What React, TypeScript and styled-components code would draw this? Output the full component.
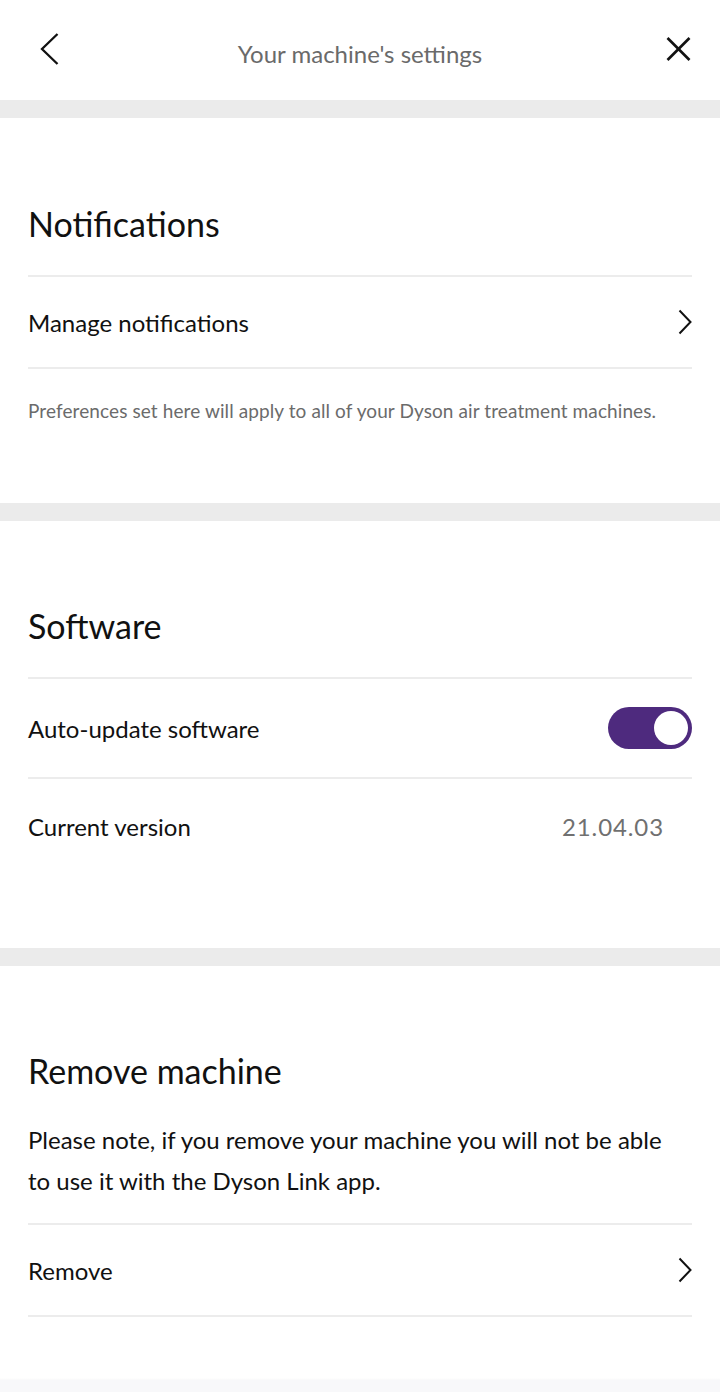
import React from "react";
import styled, { createGlobalStyle } from "styled-components";

const Global = createGlobalStyle`
  html, body { margin: 0; padding: 0; background: #ffffff; }
  body { font-family: Lato, "Open Sans", sans-serif; color: #111; }
  * { box-sizing: border-box; }
`;

const Page = styled.div`
  width: 720px;
  min-height: 1392px;
  background: #fff;
  display: flex;
  flex-direction: column;
`;

const Header = styled.header`
  height: 100px;
  display: grid;
  grid-template-columns: 100px 1fr 100px;
  align-items: center;
`;

const HeaderButton = styled.div<{ $align: "left" | "right" }>`
  display: flex;
  justify-content: ${(p) => (p.$align === "left" ? "flex-start" : "flex-end")};
  padding: ${(p) => (p.$align === "left" ? "0 0 2px 40px" : "0 29px 2px 0")};
  align-items: center;
  height: 100%;
`;

const Title = styled.h1`
  margin: 0;
  text-align: center;
  font-size: 24px;
  font-weight: 400;
  color: #6a6a6a;
  padding-top: 6px;
`;

const Band = styled.div`
  height: 18px;
  background: #ebebeb;
`;

const Section = styled.section<{ $height: number }>`
  height: ${(p) => p.$height}px;
  padding: 0 28px;
  display: flex;
  flex-direction: column;
`;

const Heading = styled.h2<{ $top: number; $height: number }>`
  margin: ${(p) => p.$top}px 0 0;
  height: ${(p) => p.$height}px;
  line-height: 52px;
  font-size: 34px;
  font-weight: 400;
  color: #111;
`;

const Divider = styled.div`
  height: 2px;
  background: #ececec;
`;

const Row = styled.div<{ $height: number }>`
  height: ${(p) => p.$height}px;
  display: flex;
  align-items: center;
  justify-content: space-between;
  font-size: 24px;
  color: #111;
`;

const Value = styled.span`
  color: #707070;
  font-size: 24px;
  padding-right: 28px;
  letter-spacing: 0.9px;
`;

const Note = styled.p`
  margin: 30px 0 0;
  font-size: 19px;
  letter-spacing: 0.1px;
  color: #6b6b6b;
`;

const Paragraph = styled.p`
  margin: 22px 0 22px;
  padding-right: 24px;
  font-size: 24px;
  line-height: 41px;
  color: #111;
`;

const Toggle = styled.div<{ $on: boolean }>`
  width: 84px;
  height: 42px;
  border-radius: 21px;
  background: ${(p) => (p.$on ? "#4e2a7e" : "#ccc")};
  display: flex;
  align-items: center;
  justify-content: ${(p) => (p.$on ? "flex-end" : "flex-start")};
  padding: 0 4px;
`;

const Knob = styled.div`
  width: 34px;
  height: 34px;
  border-radius: 50%;
  background: #fff;
`;

const Footer = styled.div`
  flex: 1;
  background: linear-gradient(#fff 0, #fff 60px, #f8f8fa 62px);
`;

const BackIcon = () => (
  <svg width="19" height="32" viewBox="0 0 19 32" fill="none" stroke="#111" strokeWidth="2.3">
    <polyline points="17.5,1 2,16 17.5,31" />
  </svg>
);

const ChevronRight = () => (
  <svg width="14" height="26" viewBox="0 0 14 26" fill="none" stroke="#111" strokeWidth="2">
    <polyline points="1.5,1.5 12.5,13 1.5,24.5" />
  </svg>
);

const CloseIcon = () => (
  <svg width="25" height="24" viewBox="0 0 25 24" stroke="#111" strokeWidth="2.6" fill="none">
    <line x1="1.5" y1="1" x2="23.5" y2="23" />
    <line x1="23.5" y1="1" x2="1.5" y2="23" />
  </svg>
);

export default function App() {
  return (
    <>
      <Global />
      <Page>
        <Header>
          <HeaderButton $align="left">
            <BackIcon />
          </HeaderButton>
          <Title>Your machine's settings</Title>
          <HeaderButton $align="right">
            <CloseIcon />
          </HeaderButton>
        </Header>
        <Band />
        <Section $height={385}>
          <Heading $top={80} $height={77}>Notifications</Heading>
          <Divider />
          <Row $height={90}>
            <span>Manage notifications</span>
            <ChevronRight />
          </Row>
          <Divider />
          <Note>Preferences set here will apply to all of your Dyson air treatment machines.</Note>
        </Section>
        <Band />
        <Section $height={427}>
          <Heading $top={79} $height={77}>Software</Heading>
          <Divider />
          <Row $height={98}>
            <span>Auto-update software</span>
            <Toggle $on>
              <Knob />
            </Toggle>
          </Row>
          <Divider />
          <Row $height={94}>
            <span>Current version</span>
            <Value>21.04.03</Value>
          </Row>
        </Section>
        <Band />
        <Section $height={352}>
          <Heading $top={79} $height={52}>Remove machine</Heading>
          <Paragraph>
            Please note, if you remove your machine you will not be able to use it with the Dyson Link app.
          </Paragraph>
          <Divider />
          <Row $height={90}>
            <span>Remove</span>
            <ChevronRight />
          </Row>
          <Divider />
        </Section>
        <Footer />
      </Page>
    </>
  );
}
